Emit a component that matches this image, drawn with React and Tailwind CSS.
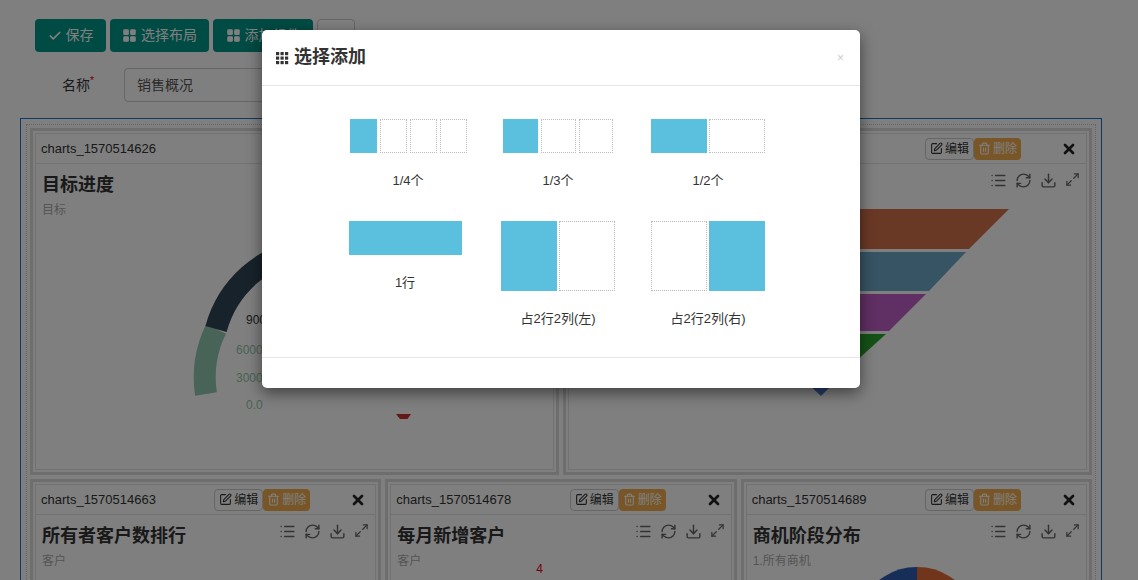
import React from 'react';
import { Check, LayoutGrid, SquarePen, Trash2, X, List, RefreshCw, Download, Maximize2 } from 'lucide-react';

const Panel = ({ id, title, sub, className = '', children }) => (
  <div className="border-[3px] border-[#ddd] p-[2px] bg-white flex flex-col min-w-0">
    <div className={`border border-[#e5e5e5] flex flex-col flex-1 ${className}`}>
      <div className="h-[30px] flex items-center px-[5px] border-b border-[#e5e5e5] text-[13px] text-[#333]">
        <span className="flex-1">{id}</span>
        <span className="flex items-center gap-[2px] h-[22px] px-[4px] border border-[#ccc] rounded-sm text-[12px]"><SquarePen size={13} />编辑</span>
        <span className="flex items-center gap-[2px] h-[22px] px-[4px] rounded-sm bg-[#f0ad4e] text-white text-[12px]"><Trash2 size={13} />删除</span>
        <X size={16} strokeWidth={4} className="ml-[40px] mr-[4px] text-[#222]" />
      </div>
      <div className="flex items-start px-[6px] pt-[8px]">
        <div className="flex-1">
          <div className="text-[18px] font-bold text-[#333]">{title}</div>
          <div className="text-[12px] text-[#aaa] mt-[2px]">{sub}</div>
        </div>
        <div className="flex gap-[8px] text-[#666]">
          <List size={17} /><RefreshCw size={17} /><Download size={17} /><Maximize2 size={15} />
        </div>
      </div>
      <div className="flex-1 relative">{children}</div>
    </div>
  </div>
);

const Box = ({ filled, className }) => (
  <div className={`${className} border border-dotted ${filled ? 'bg-[#5bc0de] border-[#5bc0de]' : 'border-[#bbb]'}`} />
);

export default function App() {
  return (
    <div className="relative w-[1138px] h-[580px] overflow-hidden bg-white" style={{ fontFamily: '"Liberation Sans", "Noto Sans CJK SC", sans-serif' }}>
      <div className="pt-[19px] pl-[35px] flex gap-[4px]">
        <button className="h-[33px] w-[71px] justify-center rounded bg-[#009688] text-white text-[14px] flex items-center gap-[4px]"><Check size={14} strokeWidth={3} />保存</button>
        <button className="h-[33px] w-[99px] justify-center rounded bg-[#009688] text-white text-[14px] flex items-center gap-[4px]"><LayoutGrid size={15} fill="white" />选择布局</button>
        <button className="h-[33px] w-[100px] justify-center rounded bg-[#009688] text-white text-[14px] flex items-center gap-[4px]"><LayoutGrid size={15} fill="white" />添加组件</button>
        <button className="h-[33px] w-[38px] rounded border border-[#ccc] bg-white" />
      </div>
      <div className="flex items-center mt-[16px] pl-[62px]">
        <span className="text-[14px] text-[#333] w-[62px]">名称<sup className="text-red-600">*</sup></span>
        <div className="h-[34px] w-[420px] border border-[#ccc] rounded-sm px-[12px] flex items-center text-[14px] text-[#555]">销售概况</div>
      </div>
      <div className="ml-[20px] mt-[16px] w-[1082px] h-[470px] border border-[#1a73c8] p-[5px]">
        <div className="border border-dotted border-[#ccc] p-[3px] flex flex-col gap-[4px] h-[470px]">
          <div className="grid grid-cols-2 gap-[4px] h-[347px]">
            <Panel id="charts_1570514626" title="目标进度" sub="目标">
              <svg className="absolute left-[140px] top-[0px]" width="260" height="200" viewBox="0 0 260 200">
                <path d="M30 175 A110 110 0 0 1 40 110" fill="none" stroke="#91c7ae" strokeWidth="22" />
                <path d="M40 110 A110 110 0 0 1 130 30" fill="none" stroke="#2f4554" strokeWidth="22" />
                <text x="70" y="105" fontSize="12" fill="#333">9000</text>
                <text x="60" y="135" fontSize="12" fill="#91c7ae">6000.00</text>
                <text x="60" y="163" fontSize="12" fill="#91c7ae">3000.00</text>
                <text x="70" y="190" fontSize="12" fill="#91c7ae">0.0</text>
                <polygon points="220,195 235,195 228,205" fill="#c23531" />
              </svg>
            </Panel>
            <Panel id="charts_1570514646" title="销售漏斗" sub="">
              <svg className="absolute left-[0px] top-[0px]" width="510" height="200" viewBox="0 0 510 200">
                <polygon points="120,8 440,8 400,48 120,48" fill="#d4724a" />
                <polygon points="120,51 397,51 360,90 120,90" fill="#6fa8c8" />
                <polygon points="120,93 357,93 320,130 120,130" fill="#c15fc9" />
                <polygon points="120,133 317,133 285,162 120,162" fill="#2aa52a" />
                <polygon points="220,165 282,165 252,195" fill="#4f7bd0" />
                <text x="185" y="180" fontSize="12" fill="#111">丢单：1</text>
              </svg>
            </Panel>
          </div>
          <div className="grid grid-cols-3 gap-[4px] flex-1">
            <Panel id="charts_1570514663" title="所有者客户数排行" sub="客户" />
            <Panel id="charts_1570514678" title="每月新增客户" sub="客户">
              <span className="absolute left-[145px] top-[-10px] text-[12px] text-red-600">4</span>
            </Panel>
            <Panel id="charts_1570514689" title="商机阶段分布" sub="1.所有商机">
              <svg className="absolute left-[100px] top-[-8px]" width="140" height="40">
                <path d="M70 60 L70 5 A60 60 0 0 0 15 40 Z" fill="#2f5fb0" />
                <path d="M70 60 L70 5 A60 60 0 0 1 125 40 Z" fill="#e06a35" />
              </svg>
            </Panel>
          </div>
        </div>
      </div>

      <div className="absolute inset-0 bg-black/50" />

      <div className="absolute left-[262px] top-[30px] w-[598px] h-[358px] bg-white rounded-[5px] shadow-[0_5px_15px_rgba(0,0,0,0.5)] flex flex-col">
        <div className="h-[56px] border-b border-[#e5e5e5] flex items-center px-[14px]">
          <svg width="13" height="13" viewBox="0 0 13 13" className="mr-[5px] mt-[2px]">
            {[0, 4.5, 9].map(x => [0, 4.5, 9].map(y => <rect key={`${x}-${y}`} x={x} y={y} width="3.2" height="3.2" fill="#333" />))}
          </svg>
          <span className="text-[18px] font-bold text-[#333] flex-1">选择添加</span>
          <span className="text-[12px] text-[#ccc] mr-[2px]">×</span>
        </div>
        <div className="flex-1 grid grid-cols-[150px_150px_150px] justify-center content-start pt-[33px] pr-[6px] text-[13px] text-[#333]">
          <div className="flex flex-col items-center">
            <div className="flex gap-[3px]"><Box filled className="w-[27px] h-[34px]" /><Box className="w-[27px] h-[34px]" /><Box className="w-[27px] h-[34px]" /><Box className="w-[27px] h-[34px]" /></div>
            <div className="mt-[18px]">1/4个</div>
          </div>
          <div className="flex flex-col items-center">
            <div className="flex gap-[3px]"><Box filled className="w-[35px] h-[34px]" /><Box className="w-[35px] h-[34px]" /><Box className="w-[34px] h-[34px]" /></div>
            <div className="mt-[18px]">1/3个</div>
          </div>
          <div className="flex flex-col items-center">
            <div className="flex gap-[2px]"><Box filled className="w-[56px] h-[34px]" /><Box className="w-[56px] h-[34px]" /></div>
            <div className="mt-[18px]">1/2个</div>
          </div>
          <div className="flex flex-col items-center mt-[30px] pr-[6px]">
            <Box filled className="w-[113px] h-[34px]" />
            <div className="mt-[18px]">1行</div>
          </div>
          <div className="flex flex-col items-center mt-[30px]">
            <div className="flex gap-[2px]"><Box filled className="w-[56px] h-[70px]" /><Box className="w-[56px] h-[70px]" /></div>
            <div className="mt-[18px]">占2行2列(左)</div>
          </div>
          <div className="flex flex-col items-center mt-[30px]">
            <div className="flex gap-[2px]"><Box className="w-[56px] h-[70px]" /><Box filled className="w-[56px] h-[70px]" /></div>
            <div className="mt-[18px]">占2行2列(右)</div>
          </div>
        </div>
        <div className="h-[31px] border-t border-[#e5e5e5]" />
      </div>
    </div>
  );
}
